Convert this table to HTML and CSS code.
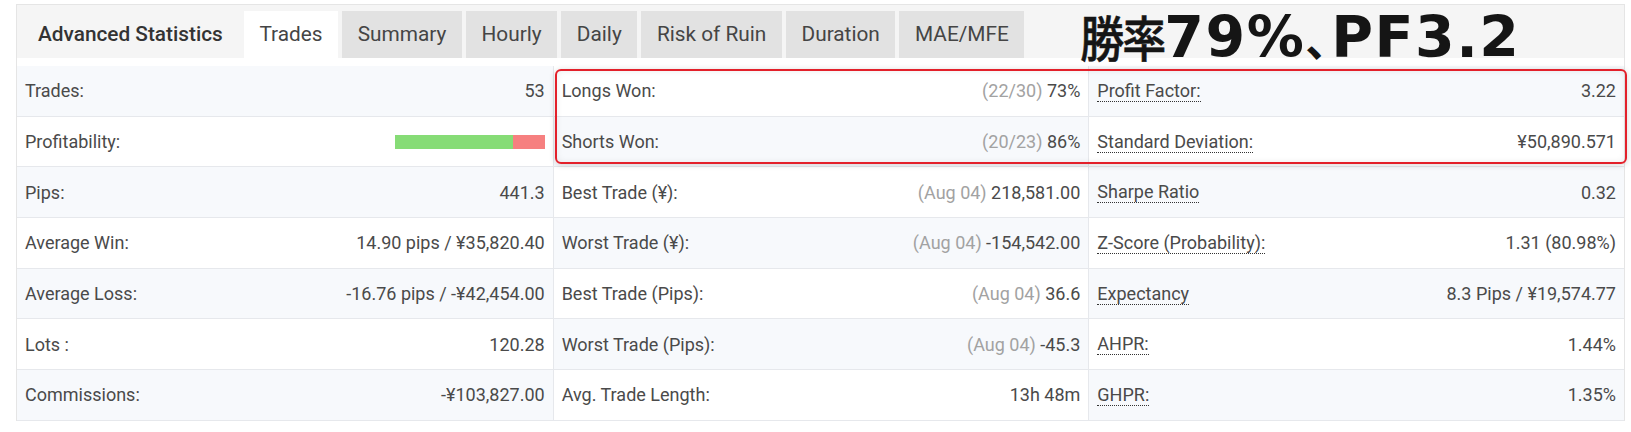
FILE: index.html
```html
<!DOCTYPE html>
<html lang="ja">
<head>
<meta charset="utf-8">
<title>Advanced Statistics</title>
<link rel="stylesheet" href="styles.css">
</head>
<body>
<section class="panel">
  <header class="panel-head">
    <h2 class="panel-title">Advanced Statistics</h2>
    <nav class="tabs">
      <span class="tab active">Trades</span>
      <span class="tab">Summary</span>
      <span class="tab">Hourly</span>
      <span class="tab">Daily</span>
      <span class="tab">Risk of Ruin</span>
      <span class="tab">Duration</span>
      <span class="tab">MAE/MFE</span>
    </nav>
    <div class="headline"><span class="kanji">勝率</span>79%<span class="comma">、</span>PF3.2</div>
  </header>

  <div class="stats">
    <div class="col col-odd">
      <div class="row"><span class="label">Trades:</span><span class="value">53</span></div>
      <div class="row"><span class="label">Profitability:</span><span class="bar"><span class="win" style="width:79.2%"></span><span class="loss"></span></span></div>
      <div class="row"><span class="label">Pips:</span><span class="value">441.3</span></div>
      <div class="row"><span class="label">Average Win:</span><span class="value">14.90 pips / ¥35,820.40</span></div>
      <div class="row"><span class="label">Average Loss:</span><span class="value">-16.76 pips / -¥42,454.00</span></div>
      <div class="row"><span class="label">Lots :</span><span class="value">120.28</span></div>
      <div class="row"><span class="label">Commissions:</span><span class="value">-¥103,827.00</span></div>
    </div>
    <div class="col col-even">
      <div class="row"><span class="label">Longs Won:</span><span class="value"><span class="muted">(22/30)</span> 73%</span></div>
      <div class="row"><span class="label">Shorts Won:</span><span class="value"><span class="muted">(20/23)</span> 86%</span></div>
      <div class="row"><span class="label">Best Trade (¥):</span><span class="value"><span class="muted">(Aug 04)</span> 218,581.00</span></div>
      <div class="row"><span class="label">Worst Trade (¥):</span><span class="value"><span class="muted">(Aug 04)</span> -154,542.00</span></div>
      <div class="row"><span class="label">Best Trade (Pips):</span><span class="value"><span class="muted">(Aug 04)</span> 36.6</span></div>
      <div class="row"><span class="label">Worst Trade (Pips):</span><span class="value"><span class="muted">(Aug 04)</span> -45.3</span></div>
      <div class="row"><span class="label">Avg. Trade Length:</span><span class="value">13h 48m</span></div>
    </div>
    <div class="col col-odd">
      <div class="row"><span class="label tip">Profit Factor:</span><span class="value">3.22</span></div>
      <div class="row"><span class="label tip">Standard Deviation:</span><span class="value">¥50,890.571</span></div>
      <div class="row"><span class="label tip">Sharpe Ratio</span><span class="value">0.32</span></div>
      <div class="row"><span class="label tip">Z-Score (Probability):</span><span class="value">1.31 (80.98%)</span></div>
      <div class="row"><span class="label tip">Expectancy</span><span class="value">8.3 Pips / ¥19,574.77</span></div>
      <div class="row"><span class="label tip">AHPR:</span><span class="value">1.44%</span></div>
      <div class="row"><span class="label tip">GHPR:</span><span class="value">1.35%</span></div>
    </div>
  </div>

  <div class="highlight"></div>
</section>
</body>
</html>
```
FILE: styles.css
```css
html, body {
  margin: 0;
  padding: 0;
  background: #ffffff;
}

body {
  font-family: Roboto, "Noto Sans", "Liberation Sans", sans-serif;
  color: #4a4a4a;
}

.panel {
  position: relative;
  margin: 4px 6px 0 16px;
  border: 1px solid #e5e5e5;
  border-bottom: none;
}

.panel-head {
  display: flex;
  align-items: flex-end;
  box-sizing: border-box;
  height: 53px;
  padding-top: 6px;
  background: #f5f5f5;
}

.panel-title {
  margin: 0;
  padding: 0 21px;
  height: 47px;
  line-height: 47px;
  font-size: 20.8px;
  font-weight: 500;
  color: #333333;
  white-space: nowrap;
}

.tabs {
  display: flex;
  gap: 4px;
}

.tab {
  height: 47px;
  line-height: 47px;
  padding: 0 15.6px;
  font-size: 20.8px;
  color: #454545;
  background: #e2e2e2;
  white-space: nowrap;
}

.tab.active {
  background: #ffffff;
}

.headline {
  position: relative;
  z-index: 2;
  margin-left: 56px;
  margin-bottom: -8px;
  line-height: 1;
  font-family: "DejaVu Sans", "Noto Sans CJK JP", sans-serif;
  font-size: 57px;
  font-weight: 700;
  letter-spacing: 1.5px;
  color: #151515;
  white-space: nowrap;
}

.kanji {
  display: inline-block;
  font-family: "Noto Sans CJK JP", sans-serif;
  font-size: 44px;
  font-weight: 500;
  letter-spacing: -2px;
  -webkit-text-stroke: 0.5px #151515;
  transform: scaleY(1.12);
  transform-origin: 0 85%;
}

.comma {
  font-family: "Noto Sans CJK JP", sans-serif;
  font-size: 44px;
  letter-spacing: -18px;
}

.stats {
  display: grid;
  grid-template-columns: repeat(3, 1fr);
  margin-top: 8px;
}

.col + .col {
  border-left: 1px solid #e6e8ec;
}

.row {
  display: flex;
  justify-content: space-between;
  align-items: center;
  box-sizing: border-box;
  height: 50.7px;
  padding: 0 8px;
  border-bottom: 1px solid #e6e8ec;
  font-size: 18px;
  white-space: nowrap;
}

.col-odd .row:nth-child(odd),
.col-even .row:nth-child(even) {
  background: #f7f9fc;
}

.tip {
  border-bottom: 1px dotted #333333;
}

.muted {
  color: #a2a2a2;
}

.bar {
  display: flex;
  width: 150px;
  height: 14px;
}

.bar .win {
  background: #86dc76;
}

.bar .loss {
  flex: 1;
  background: #f68080;
}

.highlight {
  position: absolute;
  left: 538px;
  top: 64px;
  width: 1072px;
  height: 95px;
  box-sizing: border-box;
  border: 2px solid #e3202a;
  border-radius: 6px;
  box-shadow: 0 1px 6px rgba(0, 0, 0, 0.16), inset 0 0 6px rgba(0, 0, 0, 0.08);
  pointer-events: none;
}
```
